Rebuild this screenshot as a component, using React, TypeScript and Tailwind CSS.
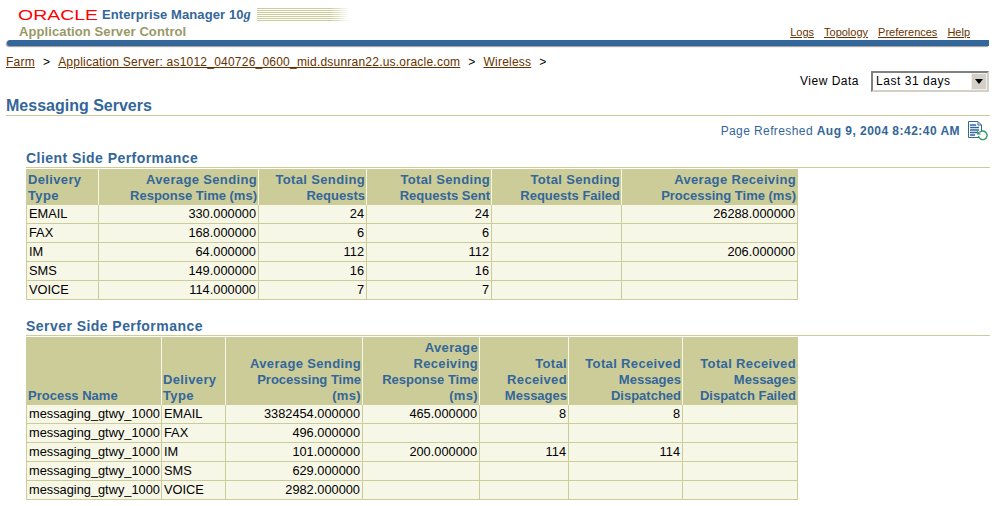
const font = "[font-family:'Liberation_Sans',Arial,sans-serif]"

const clientColumns = [
  { title: ['Delivery', 'Type'], width: 'w-[72px]', left: true },
  { title: ['Average Sending', 'Response Time (ms)'], width: 'w-[160px]' },
  { title: ['Total Sending', 'Requests'], width: 'w-[108px]' },
  { title: ['Total Sending', 'Requests Sent'], width: 'w-[125px]' },
  { title: ['Total Sending', 'Requests Failed'], width: 'w-[130px]' },
  { title: ['Average Receiving', 'Processing Time (ms)'], width: 'w-[176px]' },
]

const clientRows = [
  ['EMAIL', '330.000000', '24', '24', '', '26288.000000'],
  ['FAX', '168.000000', '6', '6', '', ''],
  ['IM', '64.000000', '112', '112', '', '206.000000'],
  ['SMS', '149.000000', '16', '16', '', ''],
  ['VOICE', '114.000000', '7', '7', '', ''],
]

const serverColumns = [
  { title: ['Process Name'], width: 'w-[135px]', left: true },
  { title: ['Delivery', 'Type'], width: 'w-[64px]', left: true },
  { title: ['Average Sending', 'Processing Time', '(ms)'], width: 'w-[137px]' },
  { title: ['Average', 'Receiving', 'Response Time', '(ms)'], width: 'w-[117px]' },
  { title: ['Total', 'Received', 'Messages'], width: 'w-[89px]' },
  { title: ['Total Received', 'Messages', 'Dispatched'], width: 'w-[114px]' },
  { title: ['Total Received', 'Messages', 'Dispatch Failed'], width: 'w-[115px]' },
]

const gtwy = 'messaging_gtwy_1000'
const serverRows = [
  [gtwy, 'EMAIL', '3382454.000000', '465.000000', '8', '8', ''],
  [gtwy, 'FAX', '496.000000', '', '', '', ''],
  [gtwy, 'IM', '101.000000', '200.000000', '114', '114', ''],
  [gtwy, 'SMS', '629.000000', '', '', '', ''],
  [gtwy, 'VOICE', '2982.000000', '', '', '', ''],
]

type Column = { title: string[]; width: string; left?: boolean }

// these lines come out narrower in the reference than the rest of the heading
const tightLine = /Requests|Messages|Dispatch|Time|Process/

function DataTable({ columns, rows }: { columns: Column[]; rows: string[][] }) {
  return (
    <table className="ml-[26px] w-[771px] table-fixed border-collapse border border-[#cccc99]">
      <thead>
        <tr>
          {columns.map((col, i) => (
            <th
              key={i}
              className={`${col.width} border-l border-[#f7f7e7] first:border-l-0 bg-[#cccc99] px-px pb-0 pt-0.5 align-bottom text-[13px] font-bold leading-4 text-[#336699] ${col.left ? 'text-left' : 'text-right'}`}
            >
              {col.title.map((line) => (
                <div key={line} className={`whitespace-nowrap ${tightLine.test(line) ? 'tracking-normal' : 'tracking-[0.35px]'}`}>{line}</div>
              ))}
            </th>
          ))}
        </tr>
      </thead>
      <tbody>
        {rows.map((row, r) => (
          <tr key={r} className="h-[19px]">
            {row.map((cell, c) => (
              <td
                key={c}
                className={`border border-[#cccc99] bg-[#f7f7e7] px-0.5 py-0 text-[12.8px] leading-[18px] text-black ${columns[c].left ? 'text-left' : 'text-right'}`}
              >
                {cell}
              </td>
            ))}
          </tr>
        ))}
      </tbody>
    </table>
  )
}

function SectionTitle({ children }: { children: string }) {
  return (
    <h2 className="ml-[26px] border-b border-[#cccc99] text-[14px] font-bold leading-[18px] tracking-[0.45px] text-[#336699]">
      {children}
    </h2>
  )
}

function OracleLogo() {
  return (
    <svg width="80" height="18" viewBox="0 0 80 18" className="-my-[2px] shrink-0">
      <text x="0" y="14" fontSize="15" textLength="80" lengthAdjust="spacingAndGlyphs" fill="#ff0000" fontFamily="Liberation Sans">ORACLE</text>
    </svg>
  )
}

function Stripes() {
  return (
    <svg width="92" height="14" viewBox="0 0 92 14" className="ml-[6px] shrink-0">
      <defs>
        <linearGradient id="fade" x1="0" x2="1" y1="0" y2="0">
          <stop offset="0.8" stopColor="#cccc99" />
          <stop offset="1" stopColor="#ffffff" />
        </linearGradient>
      </defs>
      {[0, 2, 4, 6, 8, 10, 12].map((y) => (
        <rect key={y} x="0" y={y} width="92" height="1" fill="url(#fade)" />
      ))}
    </svg>
  )
}

function RefreshIcon() {
  return (
    <svg width="20" height="20" viewBox="0 0 20 20" className="ml-2 shrink-0">
      <path d="M0.5 0.5h9.5l3.5 3.5v12.5h-13z" fill="#fff" stroke="#336699" />
      <path d="M2 4h6M2 6.5h9M2 9h9M2 11.5h7M2 14h5" stroke="#336699" strokeWidth="1.4" />
      <path d="M10 1v3h3" fill="none" stroke="#336699" />
      <path d="M11.5 11.5a4.3 4.3 0 1 1-1 3.5" fill="#fff" stroke="#339966" strokeWidth="1.4" />
      <path d="M9 9.5v4h4z" fill="#339966" />
    </svg>
  )
}

function Link({ children }: { children: string }) {
  return <a className="text-[#663300] underline">{children}</a>
}

export default function App() {
  return (
    <div className={`${font} h-[506px] w-[996px] overflow-hidden bg-white text-[12px] text-black`}>
      <header className="h-[48px]">
        <div className="flex h-[40px] justify-between pl-[18px] pr-[26px]">
          <div className="pt-[8px]">
            <div className="flex h-[14px] items-center">
              <OracleLogo />
              <span className="ml-[4px] text-[13px] font-bold leading-[14px] tracking-[0.1px] text-[#336699]">
                Enterprise Manager 10<i className="font-serif">g</i>
              </span>
              <Stripes />
            </div>
            <div className="mt-[2px] pl-px text-[13px] font-bold leading-[16px] tracking-[0.1px] text-[#999966]">
              Application Server Control
            </div>
          </div>
          <nav className="flex items-end gap-[10px] pb-px text-[11px] leading-[14px]">
            <Link>Logs</Link>
            <Link>Topology</Link>
            <Link>Preferences</Link>
            <Link>Help</Link>
          </nav>
        </div>
        <div className="ml-[7px] mr-[7px] h-[6px] rounded-l-sm bg-[#336699] shadow-[-1px_1px_1px_#999999]" />
      </header>

      <nav className="ml-[6px] mt-[6px] flex h-[16px] items-center gap-[8px] leading-[16px] tracking-[0.22px]">
        <Link>Farm</Link>
        <span>&gt;</span>
        <Link>Application Server: as1012_040726_0600_mid.dsunran22.us.oracle.com</Link>
        <span>&gt;</span>
        <Link>Wireless</Link>
        <span>&gt;</span>
      </nav>

      <div className="mr-[7px] flex h-[22px] items-center justify-end">
        <span className="mr-3 tracking-[0.5px]">View Data</span>
        <div className="flex h-[21px] w-[118px] items-center justify-between border-2 border-[#808080] border-b-[#d4d0c8] border-r-[#d4d0c8] bg-white pl-[3px] tracking-[0.55px]">
          <span>Last 31 days</span>
          <span className="flex h-[17px] w-[16px] items-center justify-center border border-[#eeeeee] bg-[#d4d0c8]">
            <svg width="8" height="5" viewBox="0 0 8 5">
              <path d="M0 0h8L4 5z" fill="#000" />
            </svg>
          </span>
        </div>
      </div>

      <h1 className="ml-[6px] mt-[4px] mr-[6px] border-b border-[#cccc99] text-[16px] font-bold leading-[19px] text-[#336699]">
        Messaging Servers
      </h1>

      <div className="mr-[8px] mt-[5px] flex h-[20px] items-center justify-end text-[#336699] tracking-[0.4px]">
        <span>Page Refreshed&nbsp;</span>
        <b className="tracking-[0.47px]">Aug 9, 2004 8:42:40 AM</b>
        <RefreshIcon />
      </div>

      <div className="mr-[6px] mt-[8px]">
        <SectionTitle>Client Side Performance</SectionTitle>
        <div className="mt-px">
          <DataTable columns={clientColumns} rows={clientRows} />
        </div>
      </div>

      <div className="mr-[6px] mt-[17px]">
        <SectionTitle>Server Side Performance</SectionTitle>
        <div className="mt-px">
          <DataTable columns={serverColumns} rows={serverRows} />
        </div>
      </div>
    </div>
  )
}
